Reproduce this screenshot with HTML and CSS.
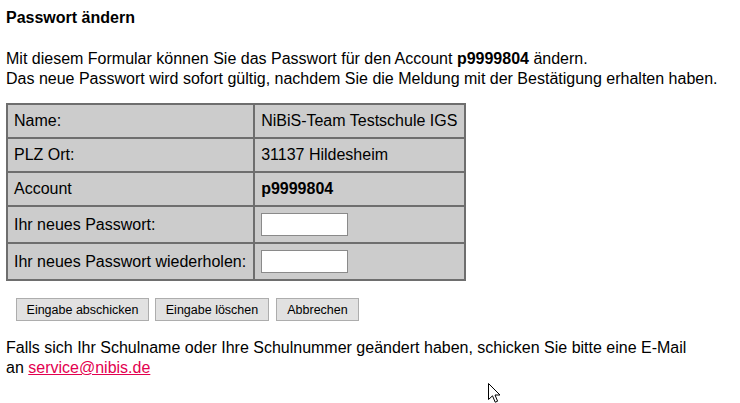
FILE: index.html
```html
<!DOCTYPE html>
<html lang="de">
  <head>
    <meta charset="UTF-8" />
    <title>Passwort ändern</title>
    <link rel="stylesheet" href="styles.css">
  </head>
  <body>
    <h1>Passwort ändern</h1>

    <p class="intro">
      Mit diesem Formular können Sie das Passwort für den Account <b>p9999804</b> ändern.<br />
      Das neue Passwort wird sofort gültig, nachdem Sie die Meldung mit der Bestätigung erhalten haben.
    </p>

    <form class="pw-form">
      <table class="pw-table">
        <tr>
          <td>Name:</td>
          <td>NiBiS-Team Testschule IGS</td>
        </tr>
        <tr>
          <td>PLZ Ort:</td>
          <td>31137 Hildesheim</td>
        </tr>
        <tr>
          <td>Account</td>
          <td><b>p9999804</b></td>
        </tr>
        <tr>
          <td>Ihr neues Passwort:</td>
          <td><input type="password" class="pw-input" /></td>
        </tr>
        <tr>
          <td>Ihr neues Passwort wiederholen:</td>
          <td><input type="password" class="pw-input" /></td>
        </tr>
      </table>

      <div class="buttons">
        <button type="button" class="btn-send">Eingabe abschicken</button>
        <button type="reset" class="btn-reset">Eingabe löschen</button>
        <button type="button" class="btn-cancel">Abbrechen</button>
      </div>
    </form>

    <p class="hint">
      Falls sich Ihr Schulname oder Ihre Schulnummer geändert haben, schicken Sie bitte eine E-Mail<br />
      an <a href="mailto:service@nibis.de">service@nibis.de</a>
    </p>

    <svg class="cursor" width="13" height="21" viewBox="0 0 13 21">
      <path d="M0.5 0.5 L0.5 16.5 L4.5 12.8 L7.2 19.2 L9.6 18.2 L7 12 L12 12 Z" fill="#fff" stroke="#000" stroke-width="1" />
    </svg>
  </body>
</html>
```

FILE: styles.css
```css
body,
h1,
p,
table,
td,
button,
input {
  margin: 0;
  padding: 0;
  box-sizing: border-box;
}

body {
  font-family: "Liberation Sans", Arial, sans-serif;
  font-size: 16px;
  line-height: 20px;
  color: #000;
  background-color: #fff;
  padding: 8px 6px 0 6px;
}

h1 {
  font-size: 16px;
  font-weight: bold;
}

.intro {
  margin-top: 21px;
}

.pw-table {
  margin-top: 14px;
  border-collapse: collapse;
  background-color: #cccccc;
  border-top: 2px solid #8a8a8a;
  border-left: 2px solid #6a6a6a;
  border-right: 2px solid #444;
  border-bottom: 2px solid #444;
}

.pw-table td {
  border: 2px solid #6e6e6e;
  padding: 6px 7px 6px 6px;
  white-space: nowrap;
  vertical-align: middle;
}

.pw-input {
  display: block;
  width: 87px;
  height: 23px;
  border: 1px solid #8a8a8a;
  background-color: #fff;
}

.buttons {
  display: flex;
  gap: 6px;
  margin: 17px 0 0 10px;
}

.buttons button {
  font-family: "Liberation Sans", Arial, sans-serif;
  font-size: 12.5px;
  height: 23px;
  padding: 0;
  background-color: #e1e1e1;
  border: 1px solid #adadad;
  color: #000;
}

.buttons .btn-send {
  width: 133px;
}

.buttons .btn-reset {
  width: 114px;
}

.buttons .btn-cancel {
  width: 83px;
  margin-left: 1px;
}

.hint {
  margin-top: 17px;
}

.hint a {
  color: #e3004f;
}

.cursor {
  position: fixed;
  left: 488px;
  top: 383px;
}
```
